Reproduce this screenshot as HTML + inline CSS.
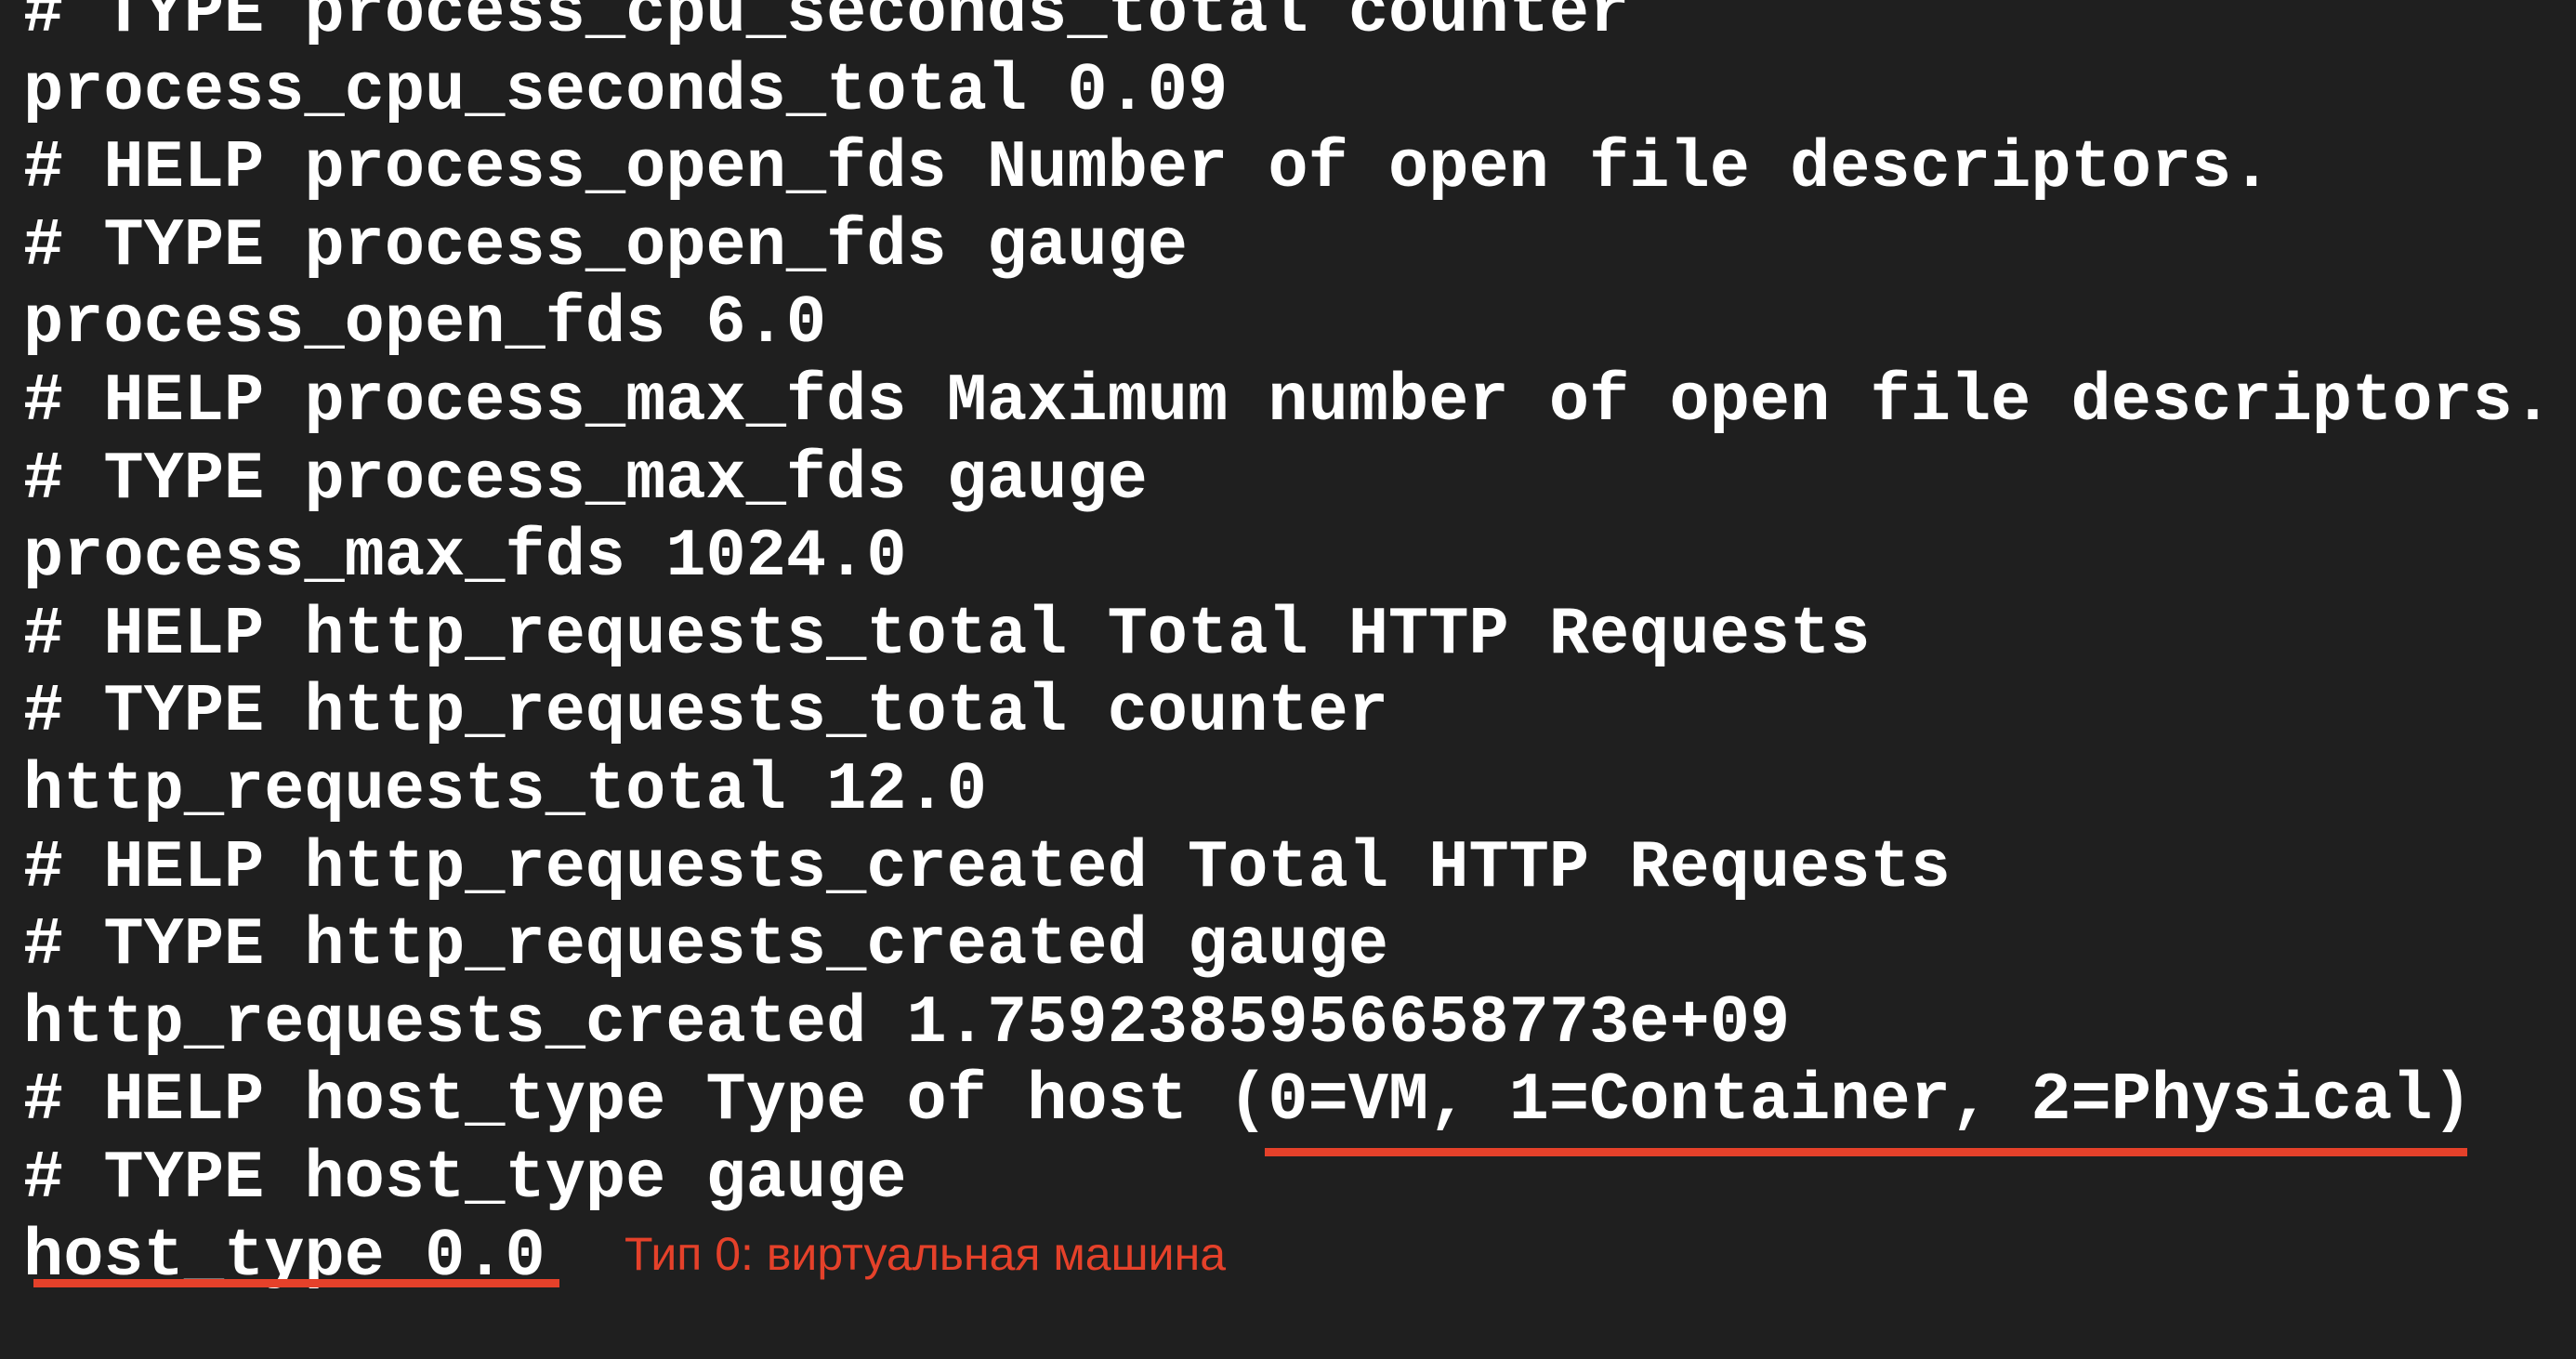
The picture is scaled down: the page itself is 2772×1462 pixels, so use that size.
<!DOCTYPE html>
<html><head><meta charset="utf-8"><style>
html,body{margin:0;padding:0;width:2772px;height:1462px;overflow:hidden;background:#1f1f1f;}
pre{position:absolute;left:25px;top:-27px;margin:0;font-family:"Liberation Mono","Courier New",monospace;font-weight:bold;font-size:72px;line-height:83.6px;color:#fff;white-space:pre;}
.u{position:absolute;background:#e5412a;height:9px;}
.note{position:absolute;left:672px;top:1319px;font-family:"Liberation Sans","Noto Sans CJK SC",sans-serif;font-size:50px;color:#e5412a;white-space:nowrap;line-height:60px;}
</style></head><body>
<pre># TYPE process_cpu_seconds_total counter
process_cpu_seconds_total 0.09
# HELP process_open_fds Number of open file descriptors.
# TYPE process_open_fds gauge
process_open_fds 6.0
# HELP process_max_fds Maximum number of open file descriptors.
# TYPE process_max_fds gauge
process_max_fds 1024.0
# HELP http_requests_total Total HTTP Requests
# TYPE http_requests_total counter
http_requests_total 12.0
# HELP http_requests_created Total HTTP Requests
# TYPE http_requests_created gauge
http_requests_created 1.7592385956658773e+09
# HELP host_type Type of host (0=VM, 1=Container, 2=Physical)
# TYPE host_type gauge
host_type 0.0</pre>
<div class="u" style="left:1361px;top:1235px;width:1294px;"></div>
<div class="u" style="left:36px;top:1376px;width:566px;"></div>
<div class="note">Тип 0: виртуальная машина</div>
</body></html>
